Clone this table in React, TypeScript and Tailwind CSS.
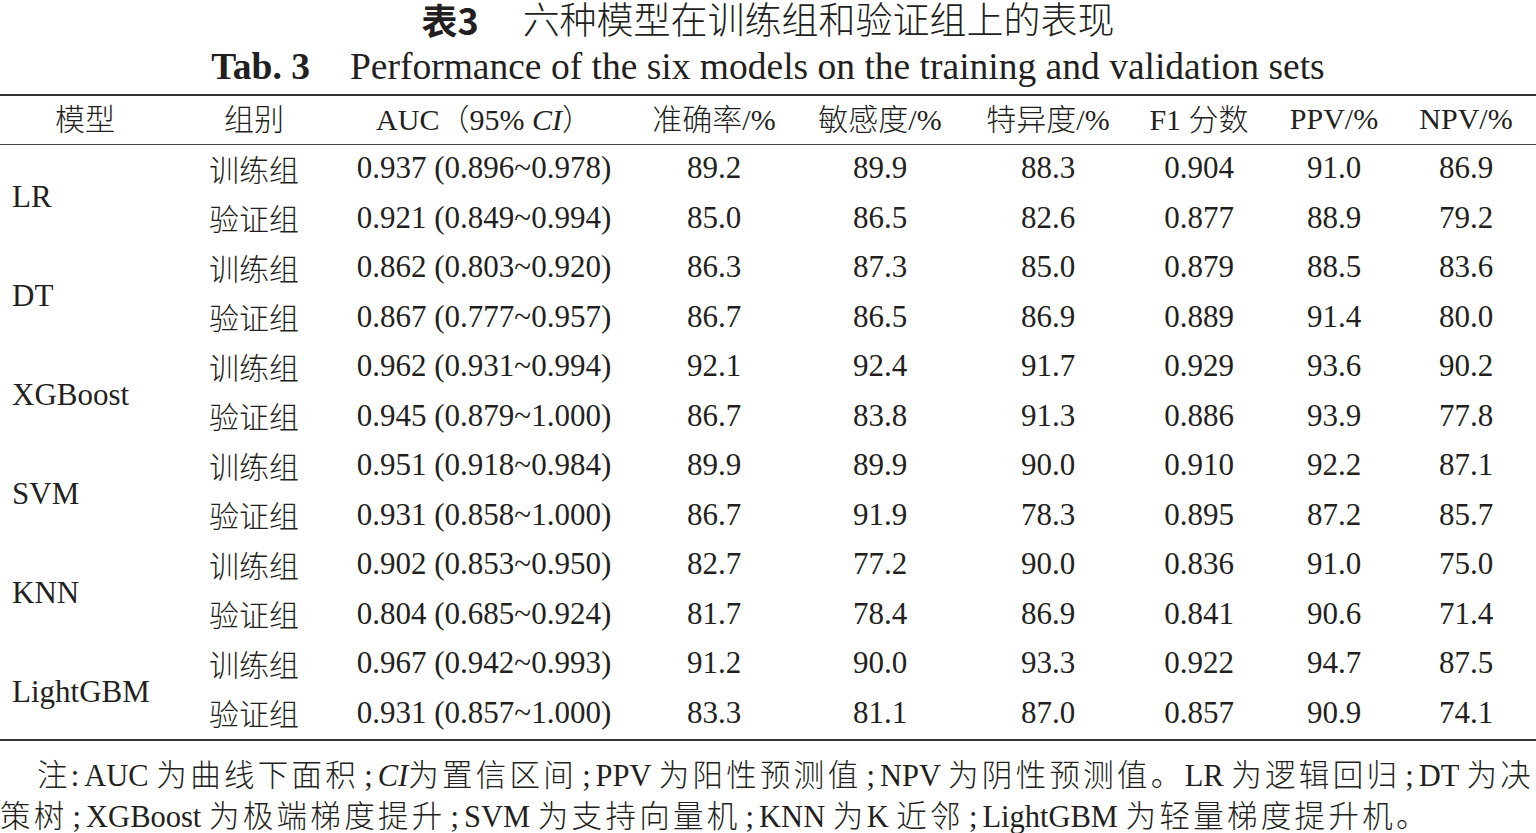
import React from "react";

const rows = [
  {
    model: "LR",
    data: [
      ["训练组", "0.937 (0.896~0.978)", "89.2", "89.9", "88.3", "0.904", "91.0", "86.9"],
      ["验证组", "0.921 (0.849~0.994)", "85.0", "86.5", "82.6", "0.877", "88.9", "79.2"],
    ],
  },
  {
    model: "DT",
    data: [
      ["训练组", "0.862 (0.803~0.920)", "86.3", "87.3", "85.0", "0.879", "88.5", "83.6"],
      ["验证组", "0.867 (0.777~0.957)", "86.7", "86.5", "86.9", "0.889", "91.4", "80.0"],
    ],
  },
  {
    model: "XGBoost",
    data: [
      ["训练组", "0.962 (0.931~0.994)", "92.1", "92.4", "91.7", "0.929", "93.6", "90.2"],
      ["验证组", "0.945 (0.879~1.000)", "86.7", "83.8", "91.3", "0.886", "93.9", "77.8"],
    ],
  },
  {
    model: "SVM",
    data: [
      ["训练组", "0.951 (0.918~0.984)", "89.9", "89.9", "90.0", "0.910", "92.2", "87.1"],
      ["验证组", "0.931 (0.858~1.000)", "86.7", "91.9", "78.3", "0.895", "87.2", "85.7"],
    ],
  },
  {
    model: "KNN",
    data: [
      ["训练组", "0.902 (0.853~0.950)", "82.7", "77.2", "90.0", "0.836", "91.0", "75.0"],
      ["验证组", "0.804 (0.685~0.924)", "81.7", "78.4", "86.9", "0.841", "90.6", "71.4"],
    ],
  },
  {
    model: "LightGBM",
    data: [
      ["训练组", "0.967 (0.942~0.993)", "91.2", "90.0", "93.3", "0.922", "94.7", "87.5"],
      ["验证组", "0.931 (0.857~1.000)", "83.3", "81.1", "87.0", "0.857", "90.9", "74.1"],
    ],
  },
];

const grid =
  "grid grid-cols-[170px_168px_292px_168px_164px_172px_130px_140px_124px]";

// Chinese text in the light CJK face
function C({ children }: { children: React.ReactNode }) {
  return <span className="font-['Noto_Sans_CJK_SC',sans-serif] font-light">{children}</span>;
}

// note text: CJK set a little looser, as in the printed page
function N({ children }: { children: React.ReactNode }) {
  return (
    <span className="font-['Noto_Sans_CJK_SC',sans-serif] font-light tracking-[3.3px]">{children}</span>
  );
}

function Semi() {
  return <span className="ml-[5px] mr-[5px]">;</span>;
}

export default function App() {
  return (
    <div className="w-[1536px] h-[833px] overflow-hidden bg-white text-[#231f20] font-['Liberation_Serif','Noto_Sans_CJK_SC',serif]">
      {/* Captions */}
      <div className="h-[40px] flex items-center justify-center leading-none pb-[3px]">
        <span className="font-bold font-['Noto_Sans_CJK_SC',sans-serif] text-[36px]">表3</span>
        <span className="ml-[44px] font-['Noto_Sans_CJK_SC',sans-serif] font-light text-[37px]">
          六种模型在训练组和验证组上的表现
        </span>
      </div>
      <div className="h-[54px] flex items-center justify-center text-[37.5px] leading-none">
        <span className="font-bold">Tab. 3</span>
        <span className="ml-[40px]">Performance of the six models on the training and validation sets</span>
      </div>

      {/* Table */}
      <div className="border-t-2 border-b-2 border-[#333]">
        <div className={`${grid} h-[49px] items-center text-[30px] leading-none border-b-[1.5px] border-[#444] pb-[3px]`}>
          <div className="text-center"><C>模型</C></div>
          <div className="text-center"><C>组别</C></div>
          <div className="text-center">
            AUC<C>（</C>95% <i>CI</i><C>）</C>
          </div>
          <div className="text-center"><C>准确率</C>/%</div>
          <div className="text-center"><C>敏感度</C>/%</div>
          <div className="text-center"><C>特异度</C>/%</div>
          <div className="text-center">F1 <C>分数</C></div>
          <div className="text-center">PPV/%</div>
          <div className="text-center">NPV/%</div>
        </div>

        {rows.map((r) => (
          <div key={r.model} className={`${grid} grid-rows-[49.5px_49.5px] text-[31px] leading-none`}>
            <div className="row-span-2 flex items-center pl-[12px] pt-[3px]">{r.model}</div>
            {r.data.map((d, i) =>
              d.map((v, j) => (
                <div
                  key={`${i}-${j}`}
                  className={`flex items-center justify-center pb-[4px] ${
                    j === 0 ? "font-['Noto_Sans_CJK_SC',sans-serif] font-light text-[30px]" : ""
                  }`}
                  style={{ gridRow: i + 1, gridColumn: j + 2 }}
                >
                  {v}
                </div>
              ))
            )}
          </div>
        ))}
      </div>

      {/* Notes */}
      <div className="mt-[13px] text-[30.5px] leading-[38px] whitespace-nowrap">
        <div className="pl-[37px]">
          <N>注</N>
          <span className="mr-[5px]">:</span>AUC <N>为曲线下面积</N>
          <Semi />
          <i>CI</i>
          <N>为置信区间</N>
          <Semi />PPV <N>为阳性预测值</N>
          <Semi />NPV <N>为阴性预测值。</N>LR <N>为逻辑回归</N>
          <Semi />DT <N>为决</N>
        </div>
        <div>
          <N>策树</N>
          <Semi />XGBoost <N>为极端梯度提升</N>
          <Semi />SVM <N>为支持向量机</N>
          <Semi />KNN <N>为</N>K <N>近邻</N>
          <Semi />LightGBM <N>为轻量梯度提升机。</N>
        </div>
      </div>
    </div>
  );
}
